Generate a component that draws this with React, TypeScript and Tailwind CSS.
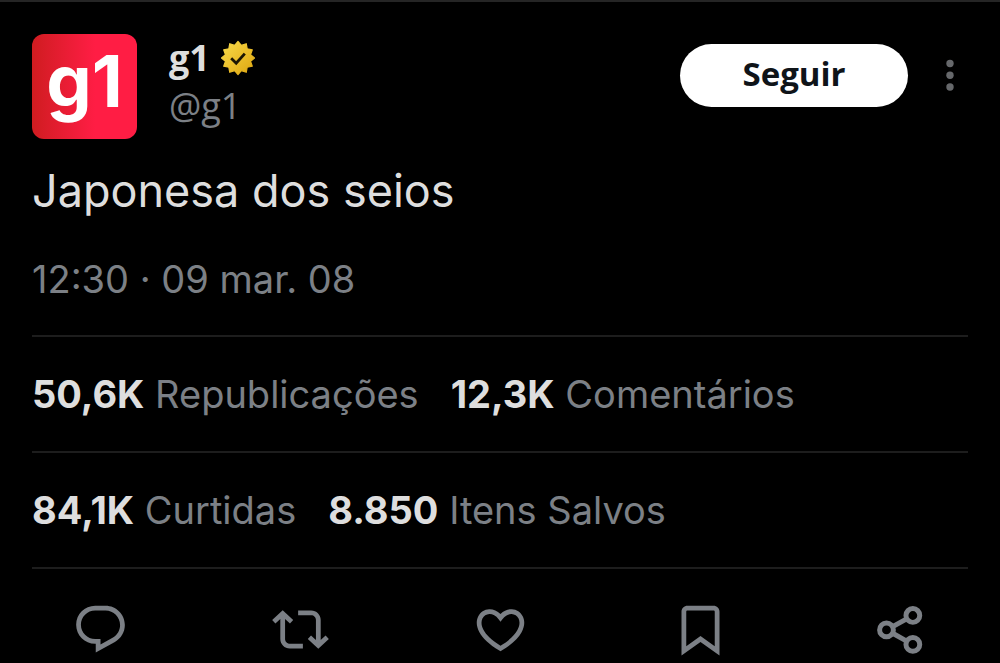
import type { ReactNode } from "react";

const GREY = "text-[#7c8086]";

const stats = [
  [
    { value: "50,6K", label: "Republicações" },
    { value: "12,3K", label: "Comentários" },
  ],
  [
    { value: "84,1K", label: "Curtidas" },
    { value: "8.850", label: "Itens Salvos" },
  ],
];

const actions: { label: string; icon: ReactNode }[] = [
  {
    label: "Comentar",
    icon: (
      <path d="M1.751 10c0-4.42 3.584-8 8.005-8h4.366c4.49 0 8.129 3.64 8.129 8.13 0 2.96-1.607 5.68-4.196 7.11l-8.054 4.46v-3.69h-.067c-4.49.1-8.183-3.51-8.183-8.01zm8.005-6c-3.317 0-6.005 2.69-6.005 6 0 3.37 2.77 6.08 6.138 6.01l.351-.01h1.761v2.3l5.087-2.81c1.951-1.08 3.163-3.13 3.163-5.36 0-3.39-2.744-6.13-6.129-6.13H9.756z" />
    ),
  },
  {
    label: "Republicar",
    icon: (
      <path d="M4.5 3.88l4.432 4.14-1.364 1.46L5.5 7.55V16c0 1.1.896 2 2 2H13v2H7.5c-2.209 0-4-1.79-4-4V7.55L1.432 9.48.068 8.02 4.5 3.88zM16.5 6H11V4h5.5c2.209 0 4 1.79 4 4v8.45l2.068-1.93 1.364 1.46-4.432 4.14-4.432-4.14 1.364-1.46 2.068 1.93V8c0-1.1-.896-2-2-2z" />
    ),
  },
  {
    label: "Curtir",
    icon: (
      <path d="M16.697 5.5c-1.222-.06-2.679.51-3.89 2.16l-.805 1.09-.806-1.09C9.984 6.01 8.526 5.44 7.304 5.5c-1.243.07-2.349.78-2.91 1.91-.552 1.12-.633 2.78.479 4.82 1.074 1.97 3.257 4.27 7.129 6.61 3.87-2.34 6.052-4.64 7.126-6.61 1.111-2.04 1.03-3.7.477-4.82-.561-1.13-1.666-1.84-2.908-1.91zm4.187 7.69c-1.351 2.48-4.001 5.12-8.379 7.67l-.503.3-.504-.3c-4.379-2.55-7.029-5.19-8.382-7.67-1.36-2.5-1.41-4.86-.514-6.67.887-1.79 2.647-2.91 4.601-3.01 1.651-.09 3.368.56 4.798 2.01 1.429-1.45 3.146-2.1 4.796-2.01 1.954.1 3.714 1.22 4.601 3.01.896 1.81.846 4.17-.514 6.67z" />
    ),
  },
  {
    label: "Salvar",
    icon: (
      <path d="M4 4.5C4 3.12 5.119 2 6.5 2h11C18.881 2 20 3.12 20 4.5v18.44l-8-5.71-8 5.71V4.5zM6.5 4c-.276 0-.5.22-.5.5v14.56l6-4.29 6 4.29V4.5c0-.28-.224-.5-.5-.5h-11z" />
    ),
  },
  {
    label: "Compartilhar",
    icon: (
      <g fill="none" stroke="currentColor" strokeWidth="2.1">
        <circle cx="6.1" cy="12.2" r="2.9" />
        <circle cx="17.2" cy="6.1" r="2.9" />
        <circle cx="17.2" cy="18.3" r="2.9" />
        <path d="M8.7 10.8l5.9-3.3M8.7 13.6l5.9 3.3" />
      </g>
    ),
  },
];

// 12 pointed star for the verified badge
const badgePoints = Array.from({ length: 24 }, (_, i) => {
  const r = i % 2 === 0 ? 16.5 : 13;
  const a = (i * Math.PI) / 12 - Math.PI / 2;
  return `${(18 + r * Math.cos(a)).toFixed(2)},${(18 + r * Math.sin(a)).toFixed(2)}`;
}).join(" ");

const VerifiedBadge = () => (
  <svg viewBox="0 0 36 36" className="size-9" role="img" aria-label="Conta verificada">
    <defs>
      <linearGradient id="gold" x1="0" y1="0" x2="1" y2="1">
        <stop offset="0" stopColor="#f6dc4c" />
        <stop offset="0.5" stopColor="#ecc02c" />
        <stop offset="1" stopColor="#dda50f" />
      </linearGradient>
    </defs>
    <polygon points={badgePoints} fill="url(#gold)" stroke="url(#gold)" strokeWidth="1.2" strokeLinejoin="round" />
    <path d="M11.2 18.2l5 5 8.6-9.6" fill="none" stroke="#1c1603" strokeWidth="2.8" />
  </svg>
);

const Avatar = () => (
  <div className="flex size-[105px] shrink-0 items-center justify-center rounded-xl bg-linear-to-r from-[#d01c20] to-[#ff1d44] to-60% pb-3 text-[72px] leading-none font-bold text-white">
    g1
  </div>
);

export default function App() {
  return (
    <div className="min-h-screen overflow-hidden bg-black font-['Inter',sans-serif] text-[#dedede]">
      <article className="border-t-2 border-[#252525]">
        <div className="px-8">
          <header className="flex items-start pt-8 pr-2">
            <Avatar />
            <div className="ml-8 flex-1 font-['Open_Sans',sans-serif]">
              <div className="flex items-center gap-2.5">
                <h1 className="text-[36px] leading-12 font-bold">g1</h1>
                <VerifiedBadge />
              </div>
              <p className={`text-[36px] leading-12 ${GREY}`}>@g1</p>
            </div>
            <button className="mt-2.5 h-[63px] w-[228px] rounded-full bg-white pb-1 font-['Open_Sans',sans-serif] text-[33px] leading-none font-bold text-[#0f1419]">
              Seguir
            </button>
            <button aria-label="Mais opções" className="mt-6 ml-8 flex h-9 w-5 justify-center text-[#66686b]">
              <svg viewBox="0 0 8 36" className="h-9 w-2" fill="currentColor">
                <circle cx="4" cy="5.5" r="3.7" />
                <circle cx="4" cy="17.3" r="3.7" />
                <circle cx="4" cy="29" r="3.7" />
              </svg>
            </button>
          </header>

          <p className="mt-6 text-[45px] leading-14">Japonesa dos seios</p>
          <p className={`mt-9 mb-8 text-[38px] leading-12 ${GREY}`}>12:30 · 09 mar. 08</p>

          {stats.map((row, i) => (
            <div key={i} className="flex h-[116px] items-center gap-8 border-t-2 border-[#1d1d1d]">
              {row.map((s) => (
                <p key={s.label} className="text-[38px] leading-12 whitespace-nowrap">
                  <span className="font-bold">{s.value}</span> <span className={GREY}>{s.label}</span>
                </p>
              ))}
            </div>
          ))}
          <div className="border-t-2 border-[#1d1d1d]" />
        </div>

        <div className={`grid grid-cols-5 pt-8 ${GREY}`}>
          {actions.map((a) => (
            <button key={a.label} aria-label={a.label} className="flex justify-center">
              <svg viewBox="0 0 24 24" className="size-[57px]" fill="currentColor">
                {a.icon}
              </svg>
            </button>
          ))}
        </div>
      </article>
    </div>
  );
}
